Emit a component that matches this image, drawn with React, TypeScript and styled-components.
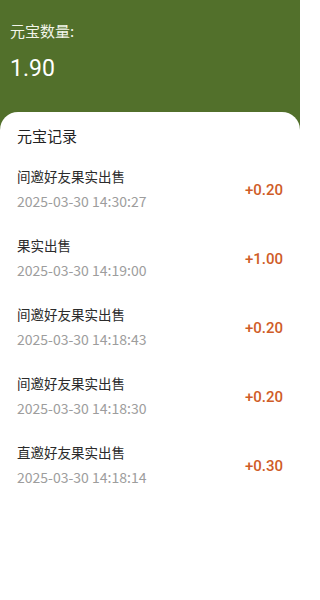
import React from "react";
import styled, { createGlobalStyle } from "styled-components";

const Global = createGlobalStyle`
  html, body { margin: 0; padding: 0; background: #ffffff; }
  body { font-family: Roboto, "Noto Sans CJK SC", "Noto Sans", sans-serif; }
  * { box-sizing: border-box; }
`;

const Page = styled.div`
  width: 300px;
  height: 600px;
  background: #52702b;
  display: flex;
  flex-direction: column;
  overflow: hidden;
`;

const Header = styled.div`
  height: 112px;
  padding: 21px 10px 0 10px;
  display: flex;
  flex-direction: column;
  color: #f2f5ea;
`;

const Label = styled.div`
  font-family: "Noto Sans CJK SC", sans-serif;
  font-size: 15px;
  line-height: 20px;
`;

const Balance = styled.div`
  font-family: Roboto, "Noto Sans CJK SC", sans-serif;
  font-size: 23px;
  line-height: 28px;
  margin-top: 14px;
  color: #ffffff;
`;

const Card = styled.div`
  flex: 1;
  background: #ffffff;
  border-radius: 18px 18px 0 0;
  padding: 14px 17px 0 17px;
`;

const CardTitle = styled.div`
  font-family: "Noto Sans CJK SC", sans-serif;
  font-size: 15px;
  line-height: 20px;
  color: #222222;
  margin-bottom: 21px;
`;

const List = styled.div`
  display: flex;
  flex-direction: column;
  gap: 26px;
`;

const Row = styled.div`
  display: flex;
  align-items: center;
  justify-content: space-between;
`;

const Info = styled.div`
  display: flex;
  flex-direction: column;
  gap: 8px;
`;

const Title = styled.div`
  font-family: "Noto Sans CJK SC", sans-serif;
  font-size: 13.5px;
  line-height: 18px;
  color: #2b2b2b;
`;

const Time = styled.div`
  font-family: "Noto Sans CJK SC", sans-serif;
  font-size: 14px;
  line-height: 17px;
  color: #9d9d9d;
`;

const Amount = styled.div`
  font-family: Roboto, sans-serif;
  font-size: 15px;
  font-weight: 500;
  color: #cf5c27;
  margin-top: 2px;
`;

const records = [
  { title: "间邀好友果实出售", time: "2025-03-30 14:30:27", amount: "+0.20" },
  { title: "果实出售", time: "2025-03-30 14:19:00", amount: "+1.00" },
  { title: "间邀好友果实出售", time: "2025-03-30 14:18:43", amount: "+0.20" },
  { title: "间邀好友果实出售", time: "2025-03-30 14:18:30", amount: "+0.20" },
  { title: "直邀好友果实出售", time: "2025-03-30 14:18:14", amount: "+0.30" },
];

export default function App() {
  return (
    <>
      <Global />
      <Page>
        <Header>
          <Label>元宝数量:</Label>
          <Balance>1.90</Balance>
        </Header>
        <Card>
          <CardTitle>元宝记录</CardTitle>
          <List>
            {records.map((r, i) => (
              <Row key={i}>
                <Info>
                  <Title>{r.title}</Title>
                  <Time>{r.time}</Time>
                </Info>
                <Amount>{r.amount}</Amount>
              </Row>
            ))}
          </List>
        </Card>
      </Page>
    </>
  );
}
